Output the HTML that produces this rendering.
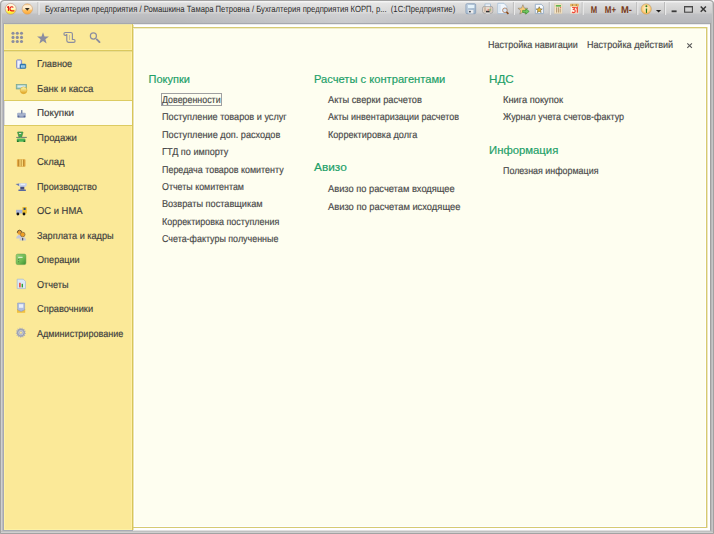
<!DOCTYPE html><html><head><meta charset="utf-8"><style>html,body{margin:0;padding:0;width:714px;height:534px;overflow:hidden;background:#fff}.r{position:absolute} .t{position:absolute;white-space:nowrap;line-height:1;font-family:'Liberation Sans', sans-serif;-webkit-text-stroke:0.18px currentColor}</style></head><body><div class="r" style="left:0px;top:0px;width:714px;height:534px;background:#ffffff;"></div>
<div class="r" style="left:0;top:0;width:714px;height:534px;background:#bcbcbc;border-radius:4px 4px 0 0"></div>
<div class="r" style="left:1px;top:1px;width:712px;height:22px;border-radius:3px 3px 0 0;background:linear-gradient(#f4f4f4 0px,#f0f0f0 1px,#dedede 2px,#cdcdcd 12px,#c0c1c4 13px,#b6b7ba 22px)"></div>
<div class="r" style="left:1px;top:1px;width:712px;height:22px;background:linear-gradient(to right,rgba(255,255,255,0) 170px,rgba(255,255,255,0.28) 345px,rgba(255,255,255,0) 500px)"></div>
<div class="r" style="left:0;top:0;width:712px;height:532px;border:1px solid #a2a2a2;border-radius:4px 4px 0 0"></div>
<div class="r" style="left:1px;top:3px;width:1px;height:530px;background:#d0d0d0;"></div>
<div class="r" style="left:712px;top:3px;width:1px;height:530px;background:#c6c6c6;"></div>
<div class="r" style="left:711px;top:23px;width:1px;height:508px;background:#bababa;"></div>
<div class="r" style="left:2px;top:23px;width:1px;height:508px;background:#bcbcbc;"></div>
<div class="r" style="left:1px;top:531px;width:712px;height:1px;background:#c0c0c0;"></div>
<div class="r" style="left:1px;top:532px;width:712px;height:1px;background:#d0d0d0;"></div>
<div class="r" style="left:3px;top:23px;width:708px;height:1px;background:#a6a8ae;"></div>
<div class="r" style="left:3px;top:23px;width:1px;height:508px;background:#a6a8b4;"></div>
<div class="r" style="left:710px;top:23px;width:1px;height:508px;background:#a0a0a0;"></div>
<div class="r" style="left:3px;top:530px;width:708px;height:1px;background:#a8abb6;"></div>
<div class="r" style="left:4px;top:24px;width:128px;height:506px;background:#fbe998;"></div>
<div class="r" style="left:4px;top:24px;width:128px;height:1px;background:#ece4a6;"></div>
<div class="r" style="left:4px;top:24px;width:1px;height:506px;background:#fdf2a6;"></div>
<div class="r" style="left:131px;top:25px;width:1px;height:505px;background:#fff0a8;"></div>
<div class="r" style="left:4px;top:529px;width:128px;height:1px;background:#fdf2a4;"></div>
<div class="r" style="left:132px;top:24px;width:1px;height:506px;background:#d8c65a;"></div>
<div class="r" style="left:133px;top:24px;width:1px;height:506px;background:#ebe4b4;"></div>
<div class="r" style="left:134px;top:24px;width:576px;height:506px;background:#ffffff;"></div>
<div class="r" style="left:133px;top:24px;width:577px;height:1px;background:#ececec;"></div>
<div class="r" style="left:3px;top:530px;width:708px;height:1px;background:#a8abb6;"></div>
<div class="r" style="left:133px;top:530px;width:577px;height:1px;background:#e0e0e0;"></div>
<div class="r" style="left:133px;top:27px;width:574px;height:1px;background:#d6ca72;"></div>
<div class="r" style="left:133px;top:28px;width:573px;height:1px;background:#f0ecc8;"></div>
<div class="r" style="left:133px;top:527px;width:574px;height:1px;background:#d6ca72;"></div>
<div class="r" style="left:706px;top:27px;width:1px;height:501px;background:#d6ca72;"></div>
<div class="r" style="left:707px;top:27px;width:1px;height:501px;background:#efe8c0;"></div>
<div class="r" style="left:135px;top:29px;width:570px;height:497px;background:#fefef0;"></div>
<div class="r" style="left:4px;top:49px;width:128px;height:1px;background:#fdf0a8;"></div>
<div class="r" style="left:4px;top:50px;width:128px;height:1px;background:#dac85e;"></div>
<div class="r" style="left:4px;top:51px;width:128px;height:1px;background:#eadc8e;"></div>
<svg class="r" style="left:0;top:0" width="140" height="60" fill="#8b8d9f"><circle cx="13" cy="33.2" r="1.55"/><circle cx="17.3" cy="33.2" r="1.55"/><circle cx="21.5" cy="33.2" r="1.55"/><circle cx="13" cy="37.4" r="1.55"/><circle cx="17.3" cy="37.4" r="1.55"/><circle cx="21.5" cy="37.4" r="1.55"/><circle cx="13" cy="41.5" r="1.55"/><circle cx="17.3" cy="41.5" r="1.55"/><circle cx="21.5" cy="41.5" r="1.55"/><path d="M43,32.2 L44.5,36.4 L48.9,36.5 L45.4,39.2 L46.6,43.4 L43,41 L39.4,43.4 L40.6,39.2 L37.1,36.5 L41.5,36.4 Z"/><g fill="none" stroke="#8b8d9f" stroke-width="1.15"><path d="M66.8,34.6 V40.6 Q66.8,42.3 68.5,42.3 H73.7 Q75.1,42.3 75.1,40.9 Q75.1,39.5 73.7,39.5 H72.4 V34.1 Q72.4,32.5 70.8,32.5 H65.4 Q63.9,32.5 63.9,34 Q63.9,35.4 65.4,35.4 Q66.8,35.4 66.8,34"/><path d="M69.5,35 V40" stroke-width="0.8" opacity="0.6"/><circle cx="93.4" cy="36" r="3.05" stroke-width="1.2"/><path d="M96.8,39.4 L99.5,42.1" stroke-width="1.9" stroke-linecap="round"/></g></svg>
<div class="t" style="left:36.6px;top:60px;font-size:10px;color:#3e3e3e;transform:scaleX(0.9225);transform-origin:0 0;text-rendering:geometricPrecision;">Главное</div>
<div class="t" style="left:36.6px;top:85px;font-size:10px;color:#3e3e3e;transform:scaleX(0.954705882352941);transform-origin:0 0;text-rendering:geometricPrecision;">Банк и касса</div>
<div class="r" style="left:4px;top:100px;width:128px;height:1px;background:#dccb62;"></div>
<div class="r" style="left:4px;top:125px;width:128px;height:1px;background:#dccb62;"></div>
<div class="r" style="left:4px;top:101px;width:128px;height:24px;background:#fefdef;"></div>
<div class="r" style="left:4px;top:101px;width:1px;height:24px;background:#dcdcd8;"></div>
<div class="t" style="left:36.6px;top:109px;font-size:10px;color:#3e3e3e;transform:scaleX(0.9812903225806452);transform-origin:0 0;text-rendering:geometricPrecision;">Покупки</div>
<div class="t" style="left:36.6px;top:134px;font-size:10px;color:#3e3e3e;transform:scaleX(0.9565714285714286);transform-origin:0 0;text-rendering:geometricPrecision;">Продажи</div>
<div class="t" style="left:36.6px;top:158px;font-size:10px;color:#3e3e3e;transform:scaleX(0.9504);transform-origin:0 0;text-rendering:geometricPrecision;">Склад</div>
<div class="t" style="left:36.6px;top:183px;font-size:10px;color:#3e3e3e;transform:scaleX(0.9173684210526315);transform-origin:0 0;text-rendering:geometricPrecision;">Производство</div>
<div class="t" style="left:36.6px;top:207px;font-size:10px;color:#3e3e3e;transform:scaleX(0.9418604651162792);transform-origin:0 0;text-rendering:geometricPrecision;">ОС и НМА</div>
<div class="t" style="left:36.6px;top:232px;font-size:10px;color:#3e3e3e;transform:scaleX(0.9158108108108107);transform-origin:0 0;text-rendering:geometricPrecision;">Зарплата и кадры</div>
<div class="t" style="left:36.6px;top:256px;font-size:10px;color:#3e3e3e;transform:scaleX(0.9131707317073169);transform-origin:0 0;text-rendering:geometricPrecision;">Операции</div>
<div class="t" style="left:36.6px;top:281px;font-size:10px;color:#3e3e3e;transform:scaleX(0.909);transform-origin:0 0;text-rendering:geometricPrecision;">Отчеты</div>
<div class="t" style="left:36.6px;top:305px;font-size:10px;color:#3e3e3e;transform:scaleX(0.9254716981132076);transform-origin:0 0;text-rendering:geometricPrecision;">Справочники</div>
<div class="t" style="left:36.6px;top:330px;font-size:10px;color:#3e3e3e;transform:scaleX(0.9052941176470588);transform-origin:0 0;text-rendering:geometricPrecision;">Администрирование</div>
<svg class="r" style="left:0;top:0" width="140" height="350"><defs><linearGradient id="gb" x1="0" x2="1"><stop offset="0" stop-color="#b7c0ea"/><stop offset="1" stop-color="#7f8cc8"/></linearGradient><linearGradient id="gc" x1="0" y1="0" x2="0" y2="1"><stop offset="0" stop-color="#ffffb0"/><stop offset="1" stop-color="#e0a020"/></linearGradient></defs><rect x="16.6" y="59.9" width="5" height="8.4" rx="0.8" fill="#dde0f6" stroke="#7c86c8" stroke-width="0.9"/><rect x="18.2" y="61" width="1.4" height="6.5" fill="#ffffff" opacity="0.8"/><rect x="20" y="64" width="5.8" height="4.5" rx="0.8" fill="#2e7cb4" stroke="#2a6aa0" stroke-width="0.5"/><rect x="21" y="65.3" width="3.8" height="2.3" fill="#a8d4ee"/><rect x="22.6" y="65.6" width="0.6" height="2" fill="#5a9ac8"/><rect x="16.2" y="84.4" width="10.4" height="4.6" fill="#8fbfb0" stroke="#6e9e90" stroke-width="0.6"/><rect x="17.4" y="85.4" width="8" height="2.2" fill="#d8ecf0"/><circle cx="23.6" cy="90.3" r="3.4" fill="url(#gc)" stroke="#d8a020" stroke-width="0.5"/><rect x="17.1" y="112.7" width="8.7" height="4.8" rx="1" fill="#a6b2cc"/><rect x="17.6" y="116.4" width="7.7" height="1.1" fill="#8090b4"/><circle cx="18.6" cy="116.3" r="0.9" fill="#5a6a98"/><circle cx="24.4" cy="116.3" r="0.9" fill="#5a6a98"/><rect x="21.1" y="110" width="1.3" height="3.6" rx="0.5" fill="#6a7aa0"/><path d="M17.5,132.2 Q17.5,131.9 18,131.9 H22.6 Q23,131.9 23,132.3 L21.6,137.4 H19 Z" fill="#46a84e" stroke="#2e7a34" stroke-width="0.5"/><rect x="18.9" y="133" width="2.4" height="1.1" rx="0.5" fill="#f0d8d8"/><rect x="16.2" y="136.9" width="3.6" height="1" fill="#707a70"/><rect x="21.2" y="136.9" width="5.6" height="1" fill="#707a70"/><rect x="16.8" y="138.4" width="8.6" height="3.3" rx="1" fill="#4cb454"/><rect x="16.8" y="140.6" width="2" height="1.3" rx="0.6" fill="#1e6a26"/><rect x="23.4" y="140.6" width="2" height="1.3" rx="0.6" fill="#1e6a26"/><rect x="16.9" y="159.2" width="8.6" height="7.5" rx="0.8" fill="#e4aa44"/><rect x="19.4" y="159.6" width="3.6" height="6.7" fill="#f8d878"/><path d="M18.7,159.6 V166.3 M21.2,159.6 V166.3 M23.7,159.6 V166.3" stroke="#a87420" stroke-width="0.7"/><path d="M15.5,183.9 L19.4,183.4 V186.2 Q17.6,185.3 15.5,183.9 Z" fill="#6a7aaa"/><path d="M19,183.2 H26.8 V185 Q26.5,186.9 24.5,187 H20.6 Q19,186.6 19,185 Z" fill="#c6d2ec"/><rect x="20.6" y="183.8" width="4.6" height="1.2" rx="0.6" fill="#e8eef8"/><rect x="20.3" y="186.8" width="4" height="2.8" fill="#454d80"/><rect x="18.3" y="189.5" width="7.7" height="1.4" rx="0.6" fill="#5868a0"/><rect x="16.1" y="209.8" width="6.8" height="3.6" fill="#a8b4d8"/><rect x="22.4" y="207" width="4.4" height="6.4" rx="0.6" fill="#f0c030"/><rect x="23.6" y="207.8" width="2" height="2.2" fill="#2a4a80"/><circle cx="17.9" cy="214" r="1.4" fill="#111"/><circle cx="24" cy="214" r="1.4" fill="#111"/><path d="M16.2,238.6 Q16.4,235.2 19.5,235 Q21,235 21.8,236 V238.6 Z" fill="#c4c8dc"/><circle cx="19.5" cy="232.5" r="2.2" fill="#e89a30"/><path d="M17.3,232.8 Q17.3,230.2 19.5,230.2 Q21.7,230.2 21.7,232.4" fill="none" stroke="#6a5434" stroke-width="1"/><path d="M19.4,240.5 Q19.8,237.1 22.7,237.1 Q25.7,237.1 26.1,240.5 Z" fill="#c8ccd8"/><rect x="22.2" y="238" width="1" height="2.4" fill="#3a3a44"/><circle cx="22.7" cy="234.5" r="2.3" fill="#f0a024" stroke="#8a6c3c" stroke-width="0.8"/><defs><linearGradient id="gg" x1="0" y1="0" x2="1" y2="1"><stop offset="0" stop-color="#98d47c"/><stop offset="0.6" stop-color="#6cb850"/><stop offset="1" stop-color="#3a9030"/></linearGradient></defs><rect x="16.1" y="254.1" width="9.8" height="10.5" rx="1.6" fill="url(#gg)" stroke="#5a9a48" stroke-width="0.5"/><rect x="18.2" y="256.8" width="4.4" height="1" fill="#f0fae8"/><rect x="18.1" y="259" width="1" height="1" fill="#3a6a30" opacity="0.7"/><rect x="18.1" y="261.2" width="1" height="1" fill="#3a6a30" opacity="0.7"/><path d="M17.2,279.2 H23.3 L25.5,281.4 V288.6 H17.2 Z" fill="#dce8f8" stroke="#9ab0d0" stroke-width="0.6"/><rect x="19.2" y="282.8" width="1.4" height="4.6" fill="#e83828"/><rect x="21.6" y="283.8" width="1.4" height="3.6" fill="#30a030"/><rect x="17" y="309" width="8.2" height="3.8" fill="#f0c040"/><path d="M17.6,303 H24.6 V309.8 L21.1,311.4 L17.6,309.8 Z" fill="#b0bee0" stroke="#7e90c0" stroke-width="0.5"/><rect x="19" y="304.2" width="4.2" height="3.6" fill="#e8eef8"/><polygon points="25.00,332.70 25.98,333.14 25.90,333.73 24.83,333.87 24.53,334.61 25.19,335.45 24.85,335.93 23.83,335.56 23.23,336.07 23.42,337.13 22.89,337.40 22.17,336.60 21.39,336.77 21.07,337.80 20.48,337.78 20.21,336.74 19.45,336.53 18.68,337.29 18.17,337.01 18.41,335.96 17.83,335.42 16.80,335.74 16.48,335.24 17.18,334.43 16.92,333.68 15.86,333.49 15.80,332.90 16.80,332.50 16.92,331.72 16.07,331.05 16.30,330.51 17.37,330.62 17.83,329.98 17.39,329.00 17.84,328.62 18.74,329.22 19.45,328.87 19.51,327.79 20.09,327.66 20.60,328.61 21.39,328.63 21.95,327.71 22.52,327.87 22.54,328.94 23.23,329.33 24.15,328.77 24.58,329.17 24.10,330.13 24.53,330.79 25.60,330.73 25.80,331.29 24.92,331.91" fill="#a4a8ba"/><circle cx="20.9" cy="332.7" r="3.2" fill="#c4c8d6" stroke="#8c90a4" stroke-width="0.7"/><circle cx="20.9" cy="332.7" r="1.4" fill="#fbe998" stroke="#9094a8" stroke-width="0.4"/></svg>
<div class="t" style="left:488.4px;top:41px;font-size:10px;color:#4a4a4a;transform:scaleX(0.9);transform-origin:0 0;text-rendering:geometricPrecision;">Настройка навигации</div>
<div class="t" style="left:587.2px;top:41px;font-size:10px;color:#4a4a4a;transform:scaleX(0.9065060240963858);transform-origin:0 0;text-rendering:geometricPrecision;">Настройка действий</div>
<svg class="r" style="left:684px;top:40px" width="12" height="12"><path d="M3.3,3.3 L7.9,7.9 M7.9,3.3 L3.3,7.9" stroke="#5a5a5a" stroke-width="1.15"/></svg>
<div class="t" style="left:148.6px;top:74px;font-size:11px;color:#22a068;">Покупки</div>
<div class="t" style="left:162px;top:96px;font-size:10px;color:#4a4a4a;transform:scaleX(0.8862711864406779);transform-origin:0 0;text-rendering:geometricPrecision;">Доверенности</div>
<div class="t" style="left:162px;top:113px;font-size:10px;color:#4a4a4a;transform:scaleX(0.9135000000000001);transform-origin:0 0;text-rendering:geometricPrecision;">Поступление товаров и услуг</div>
<div class="t" style="left:162px;top:131px;font-size:10px;color:#4a4a4a;transform:scaleX(0.9157894736842106);transform-origin:0 0;text-rendering:geometricPrecision;">Поступление доп. расходов</div>
<div class="t" style="left:162px;top:148px;font-size:10px;color:#4a4a4a;transform:scaleX(0.9098437499999998);transform-origin:0 0;text-rendering:geometricPrecision;">ГТД по импорту</div>
<div class="t" style="left:162px;top:166px;font-size:10px;color:#4a4a4a;transform:scaleX(0.8933057851239672);transform-origin:0 0;text-rendering:geometricPrecision;">Передача товаров комитенту</div>
<div class="t" style="left:162px;top:183px;font-size:10px;color:#4a4a4a;transform:scaleX(0.8879268292682928);transform-origin:0 0;text-rendering:geometricPrecision;">Отчеты комитентам</div>
<div class="t" style="left:162px;top:200px;font-size:10px;color:#4a4a4a;transform:scaleX(0.9178124999999998);transform-origin:0 0;text-rendering:geometricPrecision;">Возвраты поставщикам</div>
<div class="t" style="left:162px;top:218px;font-size:10px;color:#4a4a4a;transform:scaleX(0.8945689655172414);transform-origin:0 0;text-rendering:geometricPrecision;">Корректировка поступления</div>
<div class="t" style="left:162px;top:235px;font-size:10px;color:#4a4a4a;transform:scaleX(0.8922413793103449);transform-origin:0 0;text-rendering:geometricPrecision;">Счета-фактуры полученные</div>
<div class="t" style="left:314.3px;top:74px;font-size:11px;color:#22a068;transform:scaleX(1.0133858267716536);transform-origin:0 0;">Расчеты с контрагентами</div>
<div class="t" style="left:328.4px;top:96px;font-size:10px;color:#4a4a4a;transform:scaleX(0.9239999999999998);transform-origin:0 0;text-rendering:geometricPrecision;">Акты сверки расчетов</div>
<div class="t" style="left:328.4px;top:113px;font-size:10px;color:#4a4a4a;transform:scaleX(0.8972307692307694);transform-origin:0 0;text-rendering:geometricPrecision;">Акты инвентаризации расчетов</div>
<div class="t" style="left:328.4px;top:131px;font-size:10px;color:#4a4a4a;transform:scaleX(0.9094186046511625);transform-origin:0 0;text-rendering:geometricPrecision;">Корректировка долга</div>
<div class="t" style="left:314.3px;top:162px;font-size:11px;color:#22a068;transform:scaleX(1.0793103448275867);transform-origin:0 0;">Авизо</div>
<div class="t" style="left:328.4px;top:185px;font-size:10px;color:#4a4a4a;transform:scaleX(0.9295081967213116);transform-origin:0 0;text-rendering:geometricPrecision;">Авизо по расчетам входящее</div>
<div class="t" style="left:328.4px;top:202.5px;font-size:10px;color:#4a4a4a;transform:scaleX(0.9349999999999999);transform-origin:0 0;text-rendering:geometricPrecision;">Авизо по расчетам исходящее</div>
<div class="t" style="left:488.6px;top:74px;font-size:11px;color:#22a068;transform:scaleX(1.059090909090907);transform-origin:0 0;">НДС</div>
<div class="t" style="left:502.9px;top:96px;font-size:10px;color:#4a4a4a;transform:scaleX(0.930535714285714);transform-origin:0 0;text-rendering:geometricPrecision;">Книга покупок</div>
<div class="t" style="left:502.9px;top:113px;font-size:10px;color:#4a4a4a;transform:scaleX(0.8970000000000001);transform-origin:0 0;text-rendering:geometricPrecision;">Журнал учета счетов-фактур</div>
<div class="t" style="left:488.6px;top:145px;font-size:11px;color:#22a068;transform:scaleX(1.0287878787878784);transform-origin:0 0;">Информация</div>
<div class="t" style="left:502.9px;top:167px;font-size:10px;color:#4a4a4a;transform:scaleX(0.8904255319148937);transform-origin:0 0;text-rendering:geometricPrecision;">Полезная информация</div>
<div class="r" style="left:161px;top:93px;width:59px;height:11px;border:1px solid #a0a0a0"></div>
<svg class="r" style="left:0;top:0" width="714" height="24"><defs><linearGradient id="l1" x1="0" y1="0" x2="0" y2="1"><stop offset="0" stop-color="#fff6e0"/><stop offset="0.45" stop-color="#fffbd0"/><stop offset="0.8" stop-color="#fff23a"/><stop offset="1" stop-color="#ffe020"/></linearGradient><linearGradient id="l2" x1="0" y1="0" x2="0" y2="1"><stop offset="0" stop-color="#f8c070"/><stop offset="0.2" stop-color="#fff0d8"/><stop offset="0.5" stop-color="#ffe8c0"/><stop offset="0.62" stop-color="#ffc060"/><stop offset="1" stop-color="#ffa830"/></linearGradient><radialGradient id="l3" cx="0.5" cy="0.45" r="0.55"><stop offset="0" stop-color="#fff4d0"/><stop offset="0.6" stop-color="#ffd890"/><stop offset="1" stop-color="#f4a838"/></radialGradient><linearGradient id="sv" x1="0" y1="0" x2="1" y2="1"><stop offset="0" stop-color="#c8d6e4"/><stop offset="1" stop-color="#98b0c8"/></linearGradient></defs><circle cx="10.7" cy="8.9" r="5.5" fill="url(#l1)" stroke="#c09a88" stroke-width="0.7"/><path d="M7.1,7.4 L8.5,6.8 V10.9" fill="none" stroke="#e81a10" stroke-width="1.25"/><path d="M13.3,7.5 Q12.8,6.8 11.8,6.8 Q9.9,6.8 9.9,8.85 Q9.9,10.85 11.8,10.85 H14.4" fill="none" stroke="#e81a10" stroke-width="1.1"/><circle cx="27.3" cy="9" r="5.2" fill="url(#l2)" stroke="#d0a070" stroke-width="0.6"/><path d="M24.9,8.1 H29.7 L27.3,10.7 Z" fill="#3a3022"/><rect x="37.5" y="2" width="1" height="13" fill="#bcbcbc"/><rect x="38.5" y="2" width="1" height="13" fill="#f0f0f0"/><rect x="512.9" y="2" width="1" height="13" fill="#b8b8b8"/><rect x="513.9" y="2" width="1" height="13" fill="#eeeeee"/><rect x="548.8" y="2" width="1" height="13" fill="#b8b8b8"/><rect x="549.8" y="2" width="1" height="13" fill="#eeeeee"/><rect x="581.7" y="2" width="1" height="13" fill="#b8b8b8"/><rect x="582.7" y="2" width="1" height="13" fill="#eeeeee"/><rect x="636.3" y="2" width="1" height="13" fill="#b8b8b8"/><rect x="637.3" y="2" width="1" height="13" fill="#eeeeee"/><rect x="664.1" y="2" width="1" height="13" fill="#b8b8b8"/><rect x="665.1" y="2" width="1" height="13" fill="#eeeeee"/><rect x="465.9" y="3.7" width="9.8" height="10" rx="1.2" fill="url(#sv)" stroke="#8098b4" stroke-width="0.7"/><rect x="468" y="5" width="6.3" height="3" fill="#e4f2fa"/><rect x="468.4" y="10" width="5" height="3.5" fill="#ececec"/><rect x="469" y="10.9" width="1.8" height="1.5" fill="#404a58"/><rect x="485" y="4" width="5.5" height="3.8" fill="#f4f8fc" stroke="#88a8c8" stroke-width="0.6"/><rect x="482.6" y="6.4" width="10.2" height="6.8" rx="1.8" fill="#e6dace" stroke="#8a8a8a" stroke-width="0.6"/><rect x="484.2" y="7.2" width="1.6" height="4.6" fill="#b89a80" opacity="0.6"/><rect x="489.8" y="7.2" width="1.6" height="4.6" fill="#b89a80" opacity="0.6"/><rect x="486" y="10.8" width="3.6" height="1.8" fill="#303030"/><rect x="487.6" y="9.3" width="1.4" height="1.2" fill="#f06060"/><rect x="489.2" y="9.3" width="1.4" height="1.2" fill="#50c050"/><rect x="485.8" y="12.6" width="4" height="1" fill="#f0f0f0"/><path d="M497.8,3.3 H504 L506.8,6.3 V13.6 H497.8 Z" fill="#f0f6fc" stroke="#a4bcd4" stroke-width="0.8"/><rect x="499.2" y="4.6" width="1.4" height="7.8" fill="#d4e2f0"/><circle cx="504.9" cy="10.3" r="2.3" fill="#d8e8f8" stroke="#b08060" stroke-width="0.9"/><path d="M506.5,12 L508.4,13.8" stroke="#8a4a1a" stroke-width="1.7"/><path d="M522.9,4.7 L524.3,8.1 L527.9,8.3 L525.1,10.6 L526,14.1 L522.9,12.1 L519.8,14.1 L520.7,10.6 L517.9,8.3 L521.5,8.1 Z" fill="#f8cc78" stroke="#8a8070" stroke-width="0.6"/><path d="M522.6,10.4 H525.8 V8.7 L529.2,11.4 L525.8,14.1 V12.4 H522.6 Z" fill="#70c860" stroke="#2a8a28" stroke-width="0.6"/><path d="M535.3,4.3 H541.3 L543.4,6.5 V13.6 H535.3 Z" fill="#f8fbff" stroke="#94acc4" stroke-width="0.9"/><path d="M539.2,6.7 L540.1,8.8 L542.3,9 L540.6,10.4 L541.2,12.6 L539.2,11.4 L537.2,12.6 L537.8,10.4 L536.1,9 L538.3,8.8 Z" fill="#e8b830" stroke="#4a4a40" stroke-width="0.5"/><rect x="554.4" y="3.9" width="7.6" height="9.6" fill="#f6e6c8" stroke="#d8c8a8" stroke-width="0.5"/><rect x="555.8" y="5.1" width="5.2" height="1.5" fill="#50b040"/><path d="M556.6,7.4 V12.6 M558.4,7.4 V12.6 M560.2,8.6 V12.6" stroke="#a08058" stroke-width="0.8"/><circle cx="560.4" cy="7.6" r="0.7" fill="#f06040"/><rect x="570.3" y="4.6" width="8.3" height="9" fill="#fdf6ea" stroke="#d8c8b0" stroke-width="0.5"/><rect x="570.1" y="3.8" width="8.7" height="2.6" rx="0.6" fill="#e8b868"/><circle cx="572.4" cy="5" r="0.6" fill="#6a4a20"/><circle cx="576.3" cy="5" r="0.6" fill="#6a4a20"/><path d="M572.1,7.5 H575.1 L573.5,9.5 Q575.3,9.5 575.3,11 Q575.3,12.6 573.6,12.6 Q572.5,12.6 572,11.9" fill="none" stroke="#f04a38" stroke-width="1.2"/><path d="M576,8.3 L577.3,7.4 V12.7" fill="none" stroke="#f04a38" stroke-width="1.3"/><g font-family="Liberation Sans" font-weight="bold" font-size="10" fill="#773818" text-rendering="geometricPrecision"><text x="590.8" y="12.5" textLength="6.4" lengthAdjust="spacingAndGlyphs">M</text><text x="604.8" y="12.5" textLength="11.3" lengthAdjust="spacingAndGlyphs">M+</text><text x="620.9" y="12.5" textLength="11" lengthAdjust="spacingAndGlyphs">M-</text></g><circle cx="646.2" cy="9" r="5.2" fill="url(#l3)" stroke="#b8a888" stroke-width="0.6"/><path d="M645.7,8.4 H647.2 L646.9,12.9 H646 Z" fill="#2a7a1e"/><circle cx="646.4" cy="6.3" r="0.95" fill="#2a7a1e"/><path d="M655.9,10 H661.2 L658.6,12.6 Z" fill="#202020"/><rect x="671.6" y="10.4" width="5" height="1.8" fill="#3a3a3a"/><rect x="684.6" y="6.6" width="7.8" height="5.6" fill="none" stroke="#484848" stroke-width="1.1"/><rect x="684.1" y="6" width="8.8" height="1.3" fill="#484848"/><path d="M700.7,6.5 L705.9,11.7 M705.9,6.5 L700.7,11.7" stroke="#383838" stroke-width="1.5"/></svg>
<div class="t" style="left:45px;top:5px;font-size:9px;color:#2a2a2a;-webkit-text-stroke:0;transform:scaleX(0.853);transform-origin:0 0;text-rendering:geometricPrecision">Бухгалтерия предприятия / Ромашкина Тамара Петровна / Бухгалтерия предприятия КОРП, р...&nbsp; (1С:Предприятие)</div></body></html>
